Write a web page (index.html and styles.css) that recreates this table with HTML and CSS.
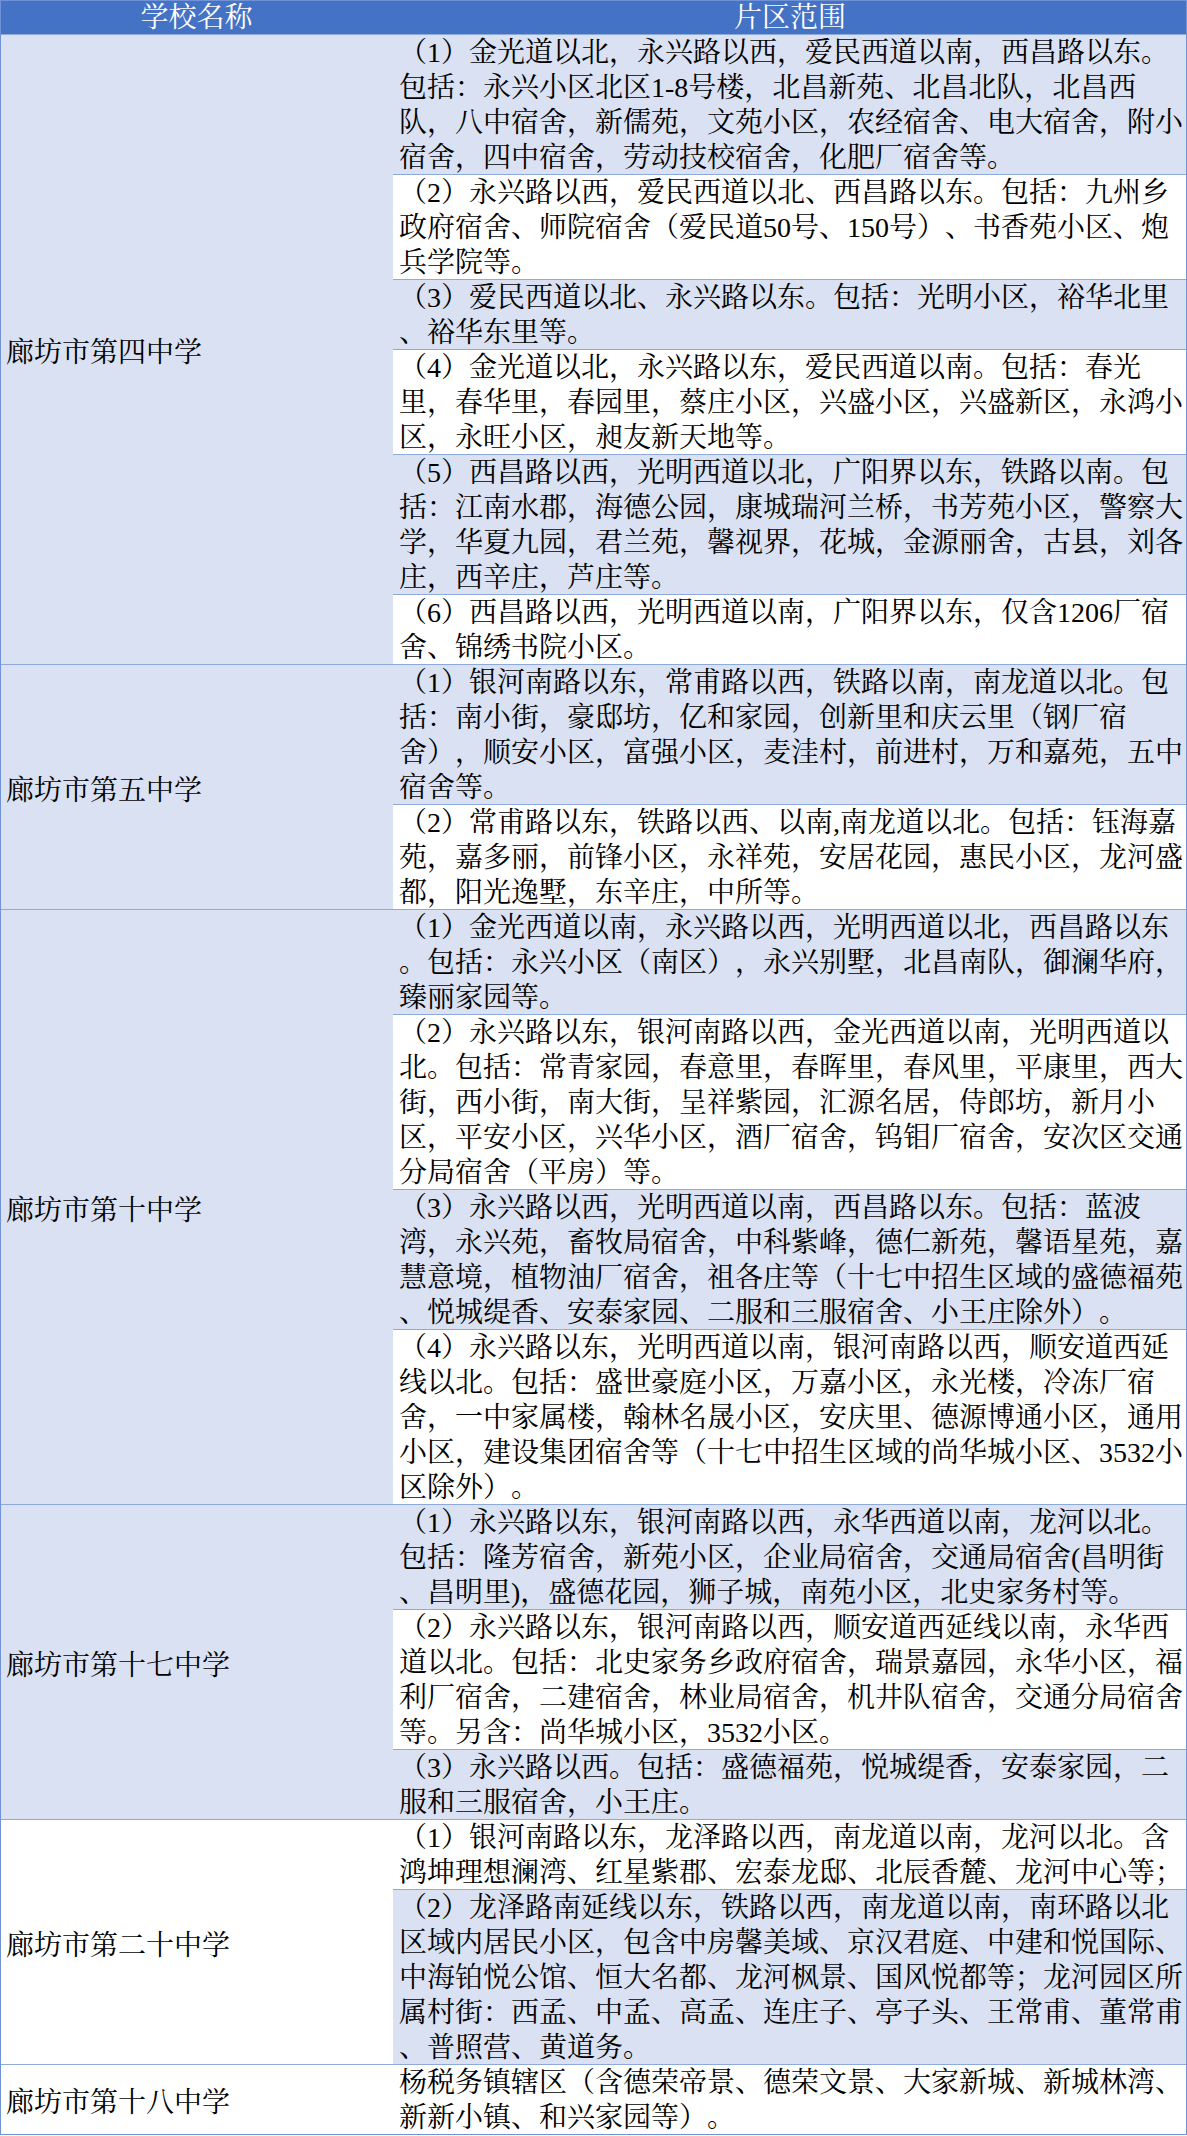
FILE: index.html
```html
<!DOCTYPE html>
<html lang="zh-CN">
<head>
<meta charset="utf-8">
<title>学校片区范围</title>
<link rel="stylesheet" href="styles.css">
</head>
<body>
<div class="table">
  <div class="head">
    <div class="hc name">学校名称</div>
    <div class="hc area-h">片区范围</div>
  </div>

  <div class="group">
    <div class="school band">廊坊市第四中学</div>
    <div class="areas">
      <div class="area band">（1）金光道以北，永兴路以西，爱民西道以南，西昌路以东。<br>包括：永兴小区北区1-8号楼，北昌新苑、北昌北队，北昌西<br>队，八中宿舍，新儒苑，文苑小区，农经宿舍、电大宿舍，附小<br>宿舍，四中宿舍，劳动技校宿舍，化肥厂宿舍等。</div>
      <div class="area">（2）永兴路以西，爱民西道以北、西昌路以东。包括：九州乡<br>政府宿舍、师院宿舍（爱民道50号、150号）、书香苑小区、炮<br>兵学院等。</div>
      <div class="area band">（3）爱民西道以北、永兴路以东。包括：光明小区，裕华北里<br>、裕华东里等。</div>
      <div class="area">（4）金光道以北，永兴路以东，爱民西道以南。包括：春光<br>里，春华里，春园里，蔡庄小区，兴盛小区，兴盛新区，永鸿小<br>区，永旺小区，昶友新天地等。</div>
      <div class="area band">（5）西昌路以西，光明西道以北，广阳界以东，铁路以南。包<br>括：江南水郡，海德公园，康城瑞河兰桥，书芳苑小区，警察大<br>学，华夏九园，君兰苑，馨视界，花城，金源丽舍，古县，刘各<br>庄，西辛庄，芦庄等。</div>
      <div class="area">（6）西昌路以西，光明西道以南，广阳界以东，仅含1206厂宿<br>舍、锦绣书院小区。</div>
    </div>
  </div>

  <div class="group">
    <div class="school band">廊坊市第五中学</div>
    <div class="areas">
      <div class="area band">（1）银河南路以东，常甫路以西，铁路以南，南龙道以北。包<br>括：南小街，豪邸坊，亿和家园，创新里和庆云里（钢厂宿<br>舍），顺安小区，富强小区，麦洼村，前进村，万和嘉苑，五中<br>宿舍等。</div>
      <div class="area">（2）常甫路以东，铁路以西、以南,南龙道以北。包括：钰海嘉<br>苑，嘉多丽，前锋小区，永祥苑，安居花园，惠民小区，龙河盛<br>都，阳光逸墅，东辛庄，中所等。</div>
    </div>
  </div>

  <div class="group">
    <div class="school band">廊坊市第十中学</div>
    <div class="areas">
      <div class="area band">（1）金光西道以南，永兴路以西，光明西道以北，西昌路以东<br>。包括：永兴小区（南区），永兴别墅，北昌南队，御澜华府，<br>臻丽家园等。</div>
      <div class="area">（2）永兴路以东，银河南路以西，金光西道以南，光明西道以<br>北。包括：常青家园，春意里，春晖里，春风里，平康里，西大<br>街，西小街，南大街，呈祥紫园，汇源名居，侍郎坊，新月小<br>区，平安小区，兴华小区，酒厂宿舍，钨钼厂宿舍，安次区交通<br>分局宿舍（平房）等。</div>
      <div class="area band">（3）永兴路以西，光明西道以南，西昌路以东。包括：蓝波<br>湾，永兴苑，畜牧局宿舍，中科紫峰，德仁新苑，馨语星苑，嘉<br>慧意境，植物油厂宿舍，祖各庄等（十七中招生区域的盛德福苑<br>、悦城缇香、安泰家园、二服和三服宿舍、小王庄除外）。</div>
      <div class="area">（4）永兴路以东，光明西道以南，银河南路以西，顺安道西延<br>线以北。包括：盛世豪庭小区，万嘉小区，永光楼，冷冻厂宿<br>舍，一中家属楼，翰林名晟小区，安庆里、德源博通小区，通用<br>小区，建设集团宿舍等（十七中招生区域的尚华城小区、3532小<br>区除外）。</div>
    </div>
  </div>

  <div class="group">
    <div class="school band">廊坊市第十七中学</div>
    <div class="areas">
      <div class="area band">（1）永兴路以东，银河南路以西，永华西道以南，龙河以北。<br>包括：隆芳宿舍，新苑小区，企业局宿舍，交通局宿舍(昌明街<br>、昌明里)，盛德花园，狮子城，南苑小区，北史家务村等。</div>
      <div class="area">（2）永兴路以东，银河南路以西，顺安道西延线以南，永华西<br>道以北。包括：北史家务乡政府宿舍，瑞景嘉园，永华小区，福<br>利厂宿舍，二建宿舍，林业局宿舍，机井队宿舍，交通分局宿舍<br>等。另含：尚华城小区，3532小区。</div>
      <div class="area band">（3）永兴路以西。包括：盛德福苑，悦城缇香，安泰家园，二<br>服和三服宿舍，小王庄。</div>
    </div>
  </div>

  <div class="group">
    <div class="school">廊坊市第二十中学</div>
    <div class="areas">
      <div class="area">（1）银河南路以东，龙泽路以西，南龙道以南，龙河以北。含<br>鸿坤理想澜湾、红星紫郡、宏泰龙邸、北辰香麓、龙河中心等；</div>
      <div class="area band">（2）龙泽路南延线以东，铁路以西，南龙道以南，南环路以北<br>区域内居民小区，包含中房馨美域、京汉君庭、中建和悦国际、<br>中海铂悦公馆、恒大名都、龙河枫景、国风悦都等；龙河园区所<br>属村街：西孟、中孟、高孟、连庄子、亭子头、王常甫、董常甫<br>、普照营、黄道务。</div>
    </div>
  </div>

  <div class="group">
    <div class="school">廊坊市第十八中学</div>
    <div class="areas">
      <div class="area">杨税务镇辖区（含德荣帝景、德荣文景、大家新城、新城林湾、<br>新新小镇、和兴家园等）。</div>
    </div>
  </div>
</div>
</body>
</html>
```

FILE: styles.css
```css
html, body {
  margin: 0;
  padding: 0;
  background: #ffffff;
}

body {
  font-family: "Liberation Serif", "Noto Serif CJK SC", "Noto Sans CJK SC", serif;
  font-size: 28px;
  color: #000000;
  text-spacing-trim: space-all;
}

.table {
  width: 1187px;
  outline: 1px solid #6f93d6;
  outline-offset: -1px;
}

.head {
  display: flex;
  height: 35px;
  background: #4472c4;
  color: #ffffff;
  line-height: 35px;
  box-shadow: inset 0 -1px 0 #8eaadb;
}

.hc {
  text-align: center;
  white-space: nowrap;
}

.hc.name {
  width: 393px;
  flex: none;
}

.hc.area-h {
  flex: 1;
}

.group {
  display: flex;
}

.school {
  width: 393px;
  flex: none;
  display: flex;
  align-items: center;
  padding-left: 6px;
  box-sizing: border-box;
  white-space: nowrap;
  background: #ffffff;
  box-shadow: inset 0 -1px 0 #8eaadb;
}

.areas {
  flex: 1;
  display: flex;
  flex-direction: column;
}

.area {
  line-height: 35px;
  padding-left: 6px;
  white-space: nowrap;
  background: #ffffff;
  box-shadow: inset 0 -1px 0 #8eaadb;
}

.band {
  background: #d9e1f2;
}
```
